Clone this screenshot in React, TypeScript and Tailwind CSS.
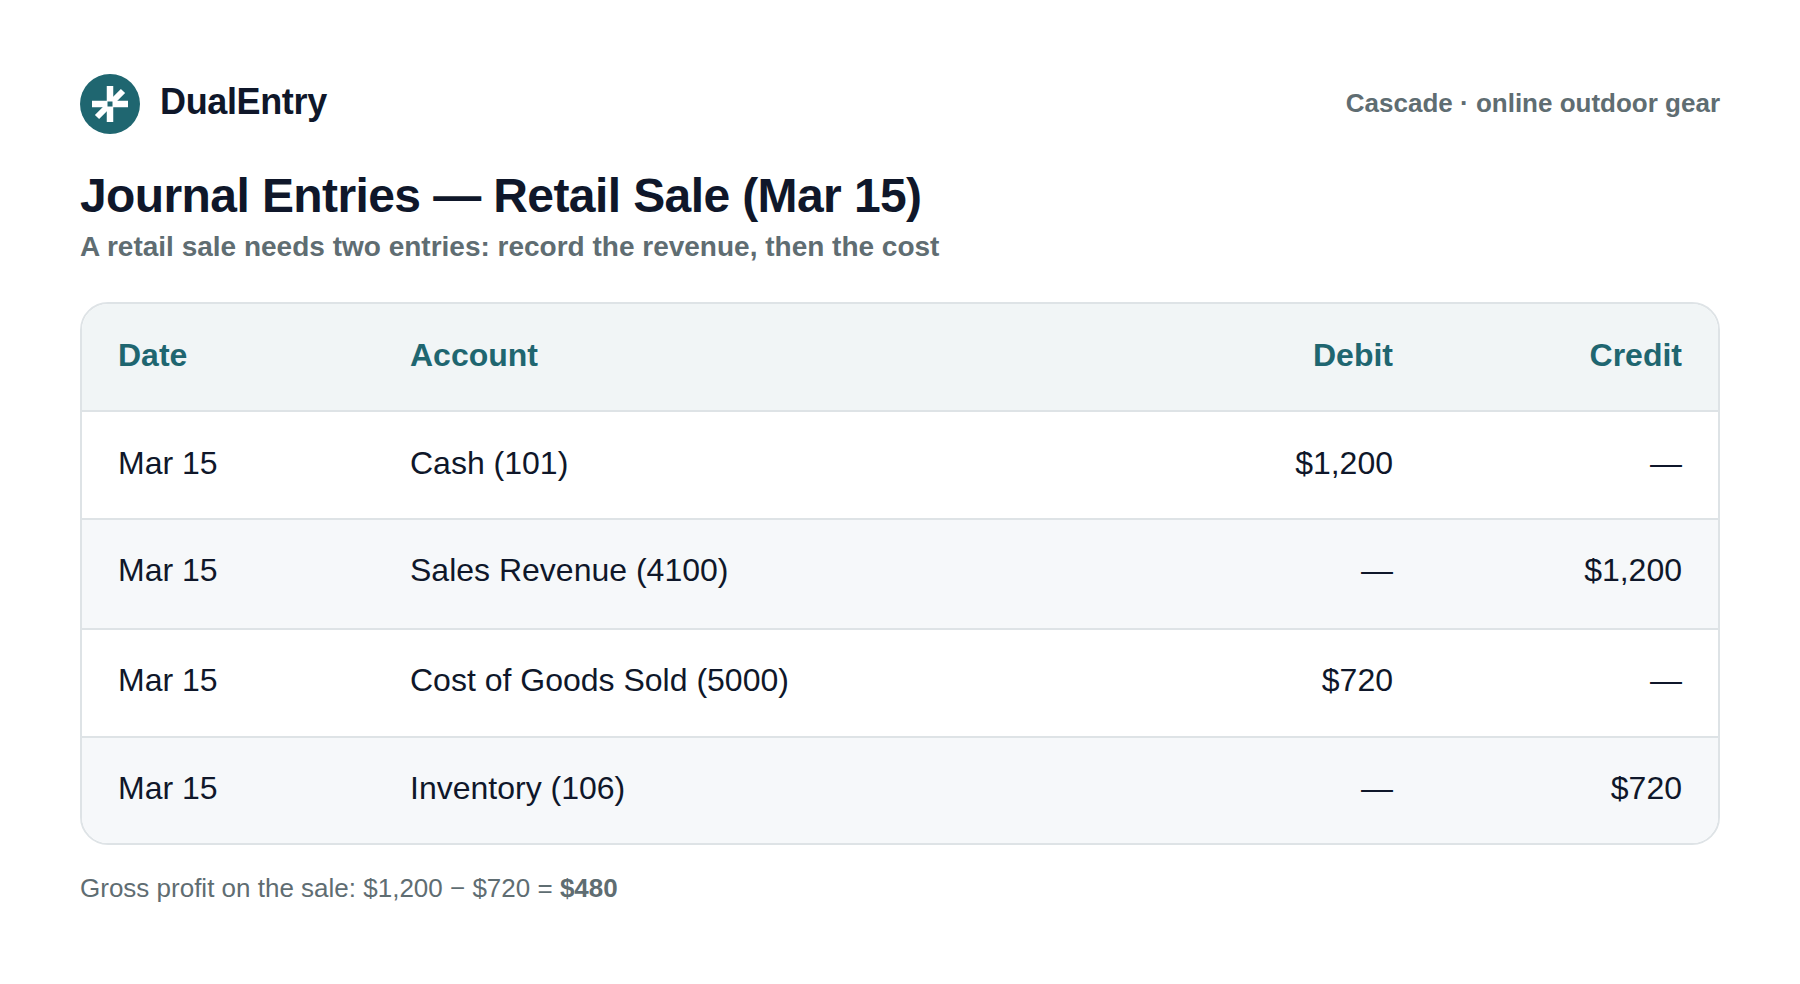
const rows = [
  { date: "Mar 15", account: "Cash (101)", debit: "$1,200", credit: "—", rowClass: "h-[108px] pb-1 bg-white" },
  { date: "Mar 15", account: "Sales Revenue (4100)", debit: "—", credit: "$1,200", rowClass: "h-[110px] pb-2 bg-[#f6f8fa]" },
  { date: "Mar 15", account: "Cost of Goods Sold (5000)", debit: "$720", credit: "—", rowClass: "h-[108px] pb-[6px] bg-white" },
  { date: "Mar 15", account: "Inventory (106)", debit: "—", credit: "$720", rowClass: "h-[107px] pb-[5px] bg-[#f6f8fa]" },
];

function Logo() {
  return (
    <svg width="60" height="60" viewBox="0 0 60 60" className="shrink-0">
      <circle cx="30" cy="30" r="30" fill="#1f6670" />
      <g stroke="#ffffff" strokeWidth="6.5" fill="none">
        <path d="M30 12V48" />
        <path d="M12 30H48" />
        <path d="M30 30L43 17" strokeWidth="6" />
        <path d="M30 30L17 43" strokeWidth="6" />
      </g>
      <rect x="27.5" y="27.5" width="5" height="5" fill="#1f6670" />
    </svg>
  );
}

export default function App() {
  return (
    <div className="min-h-[984px] bg-white px-20 pt-[74px] font-['Liberation_Sans',sans-serif] text-[#0f172a]">
      <header className="flex h-[60px] items-center justify-between">
        <div className="flex items-center gap-5">
          <Logo />
          <span className="pb-1 text-[36px] leading-none font-bold tracking-[-0.36px]">DualEntry</span>
        </div>
        <span className="pb-[2px] text-[26px] font-bold text-[#5f6d72]">Cascade · online outdoor gear</span>
      </header>
      <h1 className="mt-[34px] text-[48px] leading-[56px] font-bold tracking-[-0.6px]">
        Journal Entries — Retail Sale (Mar 15)
      </h1>
      <p className="mt-[5px] text-[28px] leading-[36px] font-bold text-[#5f6d72]">
        A retail sale needs two entries: record the revenue, then the cost
      </p>
      <div className="mt-[37px] overflow-hidden rounded-[28px] border-2 border-[#dee3e6] text-[32px]">
        <div className="grid h-[106px] grid-cols-[292px_1fr_289px_289px] items-center bg-[#f1f5f6] pb-1 font-bold text-[#1f6670]">
          <div className="pl-9">Date</div>
          <div className="pl-9">Account</div>
          <div className="pr-9 text-right">Debit</div>
          <div className="pr-9 text-right">Credit</div>
        </div>
        {rows.map((r) => (
          <div
            key={r.account}
            className={`grid grid-cols-[292px_1fr_289px_289px] items-center border-t-2 border-[#dee3e6] ${r.rowClass}`}
          >
            <div className="pl-9">{r.date}</div>
            <div className="pl-9">{r.account}</div>
            <div className="pr-9 text-right">{r.debit}</div>
            <div className="pr-9 text-right">{r.credit}</div>
          </div>
        ))}
      </div>
      <p className="mt-[24px] text-[26px] text-[#5f6d72]">
        Gross profit on the sale: $1,200 − $720 = <strong className="font-bold">$480</strong>
      </p>
    </div>
  );
}
